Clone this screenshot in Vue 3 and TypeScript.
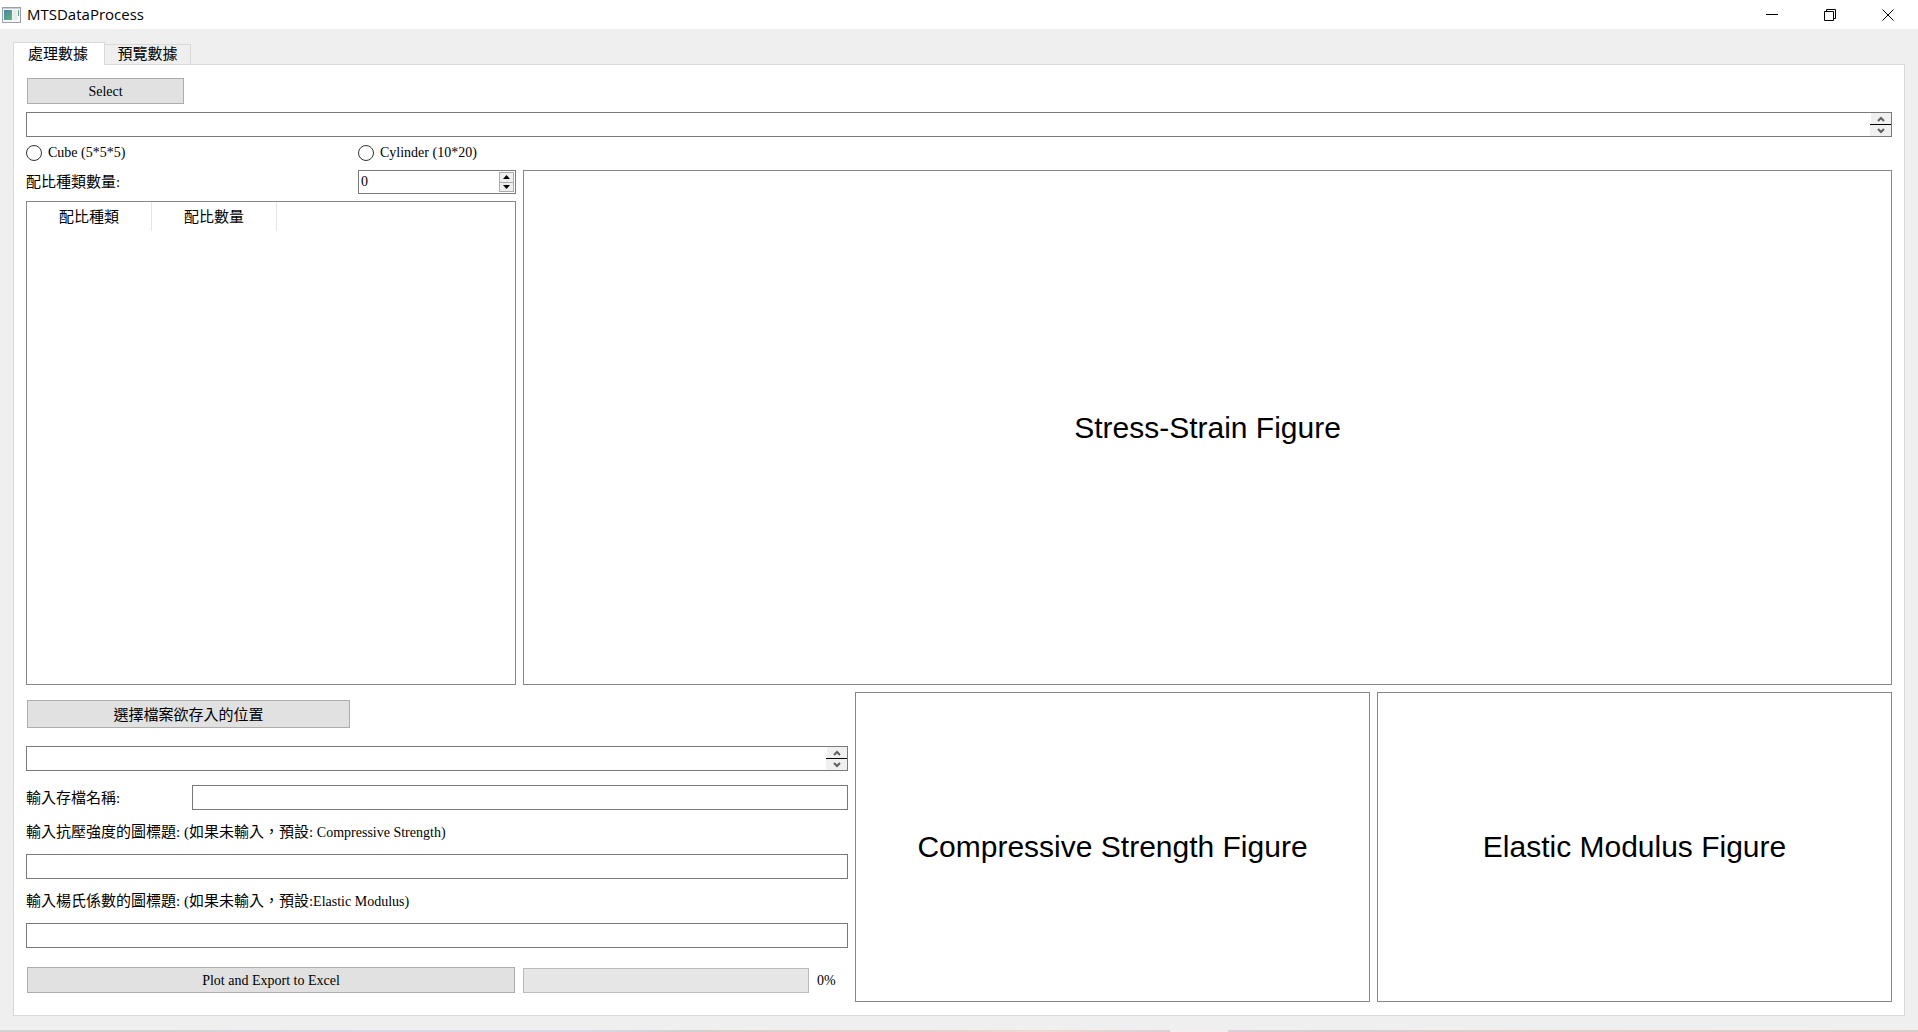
<script setup lang="ts">
import { ref } from 'vue'

type Tab = 'process' | 'preview'

const activeTab = ref<Tab>('process')
const tabs: { id: Tab; label: string }[] = [
  { id: 'process', label: '處理數據' },
  { id: 'preview', label: '預覽數據' },
]

const columns = ['配比種類', '配比數量']
const shape = ref('')
const mixCount = ref(0)
const sourceFiles = ref('')
const savePath = ref('')
const fileName = ref('')
const strengthTitle = ref('')
const modulusTitle = ref('')
const progress = ref(0)

function step(delta: number): void {
  mixCount.value = Math.max(0, Number(mixCount.value) + delta)
}
</script>

<template>
  <div class="window" lang="zh-Hant">
    <header class="titlebar">
      <svg class="app-icon" width="19" height="16" viewBox="0 0 19 16" aria-hidden="true">
        <defs>
          <linearGradient id="screen" x1="0" y1="0" x2="1" y2="1">
            <stop offset="0" stop-color="#4a86a8" />
            <stop offset="1" stop-color="#62b17c" />
          </linearGradient>
        </defs>
        <rect x="0.5" y="0.5" width="18" height="15" fill="#f4f6f7" stroke="#9aa0a8" />
        <rect x="1" y="1" width="17" height="1" fill="#c9ced4" />
        <rect x="2" y="3" width="8" height="10" fill="url(#screen)" />
        <rect x="11" y="3" width="4" height="10" fill="#e6eaec" />
        <rect x="16" y="3" width="1" height="6" fill="#5fa58c" />
      </svg>
      <h1>MTSDataProcess</h1>
      <div class="window-buttons">
        <button type="button" aria-label="Minimize">
          <svg width="12" height="12" viewBox="0 0 12 12"><path d="M0 5.5H12" /></svg>
        </button>
        <button type="button" aria-label="Restore">
          <svg width="12" height="12" viewBox="0 0 12 12"><path d="M.5 2.5H9.5V11.5H.5ZM2.5 2.5V.5H11.5V9.5H9.5" /></svg>
        </button>
        <button type="button" aria-label="Close">
          <svg width="12" height="12" viewBox="0 0 12 12"><path d="M.5 .5L11.5 11.5M11.5 .5L.5 11.5" /></svg>
        </button>
      </div>
    </header>

    <main class="client">
      <div class="tabs" role="tablist">
        <button
          v-for="tab in tabs"
          :key="tab.id"
          type="button"
          role="tab"
          :aria-selected="activeTab === tab.id"
          :class="['tab', { active: activeTab === tab.id }]"
          @click="activeTab = tab.id"
        >{{ tab.label }}</button>
      </div>

      <section class="pane">
        <button type="button" class="push select latin">Select</button>

        <div class="field scroller">
          <textarea v-model="sourceFiles" aria-label="Selected files"></textarea>
          <div class="scroll-buttons">
            <button type="button" aria-label="Scroll up">
              <svg width="8" height="6" viewBox="0 0 8 6"><path d="M1 5L4 2L7 5" /></svg>
            </button>
            <button type="button" aria-label="Scroll down">
              <svg width="8" height="6" viewBox="0 0 8 6"><path d="M1 1L4 4L7 1" /></svg>
            </button>
          </div>
        </div>

        <div class="shapes latin">
          <label><input v-model="shape" type="radio" name="shape" value="cube" />Cube (5*5*5)</label>
          <label><input v-model="shape" type="radio" name="shape" value="cylinder" />Cylinder (10*20)</label>
        </div>

        <div class="upper">
          <div class="mix">
            <div class="mix-count">
              <label for="mix-count">配比種類數量:</label>
              <div class="field spin">
                <input id="mix-count" v-model="mixCount" class="latin" type="text" inputmode="numeric" />
                <div class="spin-buttons">
                  <button type="button" aria-label="Increase" @click="step(1)">
                    <svg width="7" height="4" viewBox="0 0 7 4"><path d="M0 4L3.5 0L7 4Z" /></svg>
                  </button>
                  <button type="button" aria-label="Decrease" @click="step(-1)">
                    <svg width="7" height="4" viewBox="0 0 7 4"><path d="M0 0L3.5 4L7 0Z" /></svg>
                  </button>
                </div>
              </div>
            </div>
            <div class="frame table-frame">
              <table>
                <thead>
                  <tr><th v-for="name in columns" :key="name" scope="col">{{ name }}</th></tr>
                </thead>
              </table>
            </div>
          </div>
          <div class="frame figure">Stress-Strain Figure</div>
        </div>

        <div class="lower">
          <form class="export" @submit.prevent>
            <button type="button" class="push location">選擇檔案欲存入的位置</button>
            <div class="field scroller save-path">
              <textarea v-model="savePath" aria-label="Save location"></textarea>
              <div class="scroll-buttons">
                <button type="button" aria-label="Scroll up">
                  <svg width="8" height="6" viewBox="0 0 8 6"><path d="M1 5L4 2L7 5" /></svg>
                </button>
                <button type="button" aria-label="Scroll down">
                  <svg width="8" height="6" viewBox="0 0 8 6"><path d="M1 1L4 4L7 1" /></svg>
                </button>
              </div>
            </div>
            <div class="name-row">
              <label for="file-name">輸入存檔名稱:</label>
              <input id="file-name" v-model="fileName" class="field" type="text" />
            </div>
            <label class="caption" for="strength-title">輸入抗壓強度的圖標題: (如果未輸入，預設: <span class="latin">Compressive Strength)</span></label>
            <input id="strength-title" v-model="strengthTitle" class="field" type="text" />
            <label class="caption" for="modulus-title">輸入楊氏係數的圖標題: (如果未輸入，預設:<span class="latin">Elastic Modulus)</span></label>
            <input id="modulus-title" v-model="modulusTitle" class="field" type="text" />
            <div class="run-row latin">
              <button type="submit" class="push">Plot and Export to Excel</button>
              <div class="progress">
                <progress id="export-progress" :value="progress" max="100"></progress>
                <label for="export-progress">{{ progress }}%</label>
              </div>
            </div>
          </form>
          <div class="frame figure">Compressive Strength Figure</div>
          <div class="frame figure">Elastic Modulus Figure</div>
        </div>
      </section>
    </main>
    <div class="desktop-edge"></div>
  </div>
</template>

<style>
body {
  margin: 0;
}
</style>

<style scoped>
.window {
  display: flex;
  flex-direction: column;
  min-height: 100vh;
  background: #efefef;
  color: #000;
  font: 15px/20px "Liberation Serif", "Noto Sans CJK TC", serif;
}

.window *,
.window {
  box-sizing: border-box;
}

button,
input,
textarea {
  margin: 0;
  padding: 0;
  border: 0;
  border-radius: 0;
  background: none;
  color: inherit;
  font: inherit;
  outline: none;
}

.latin {
  font-size: 14px;
}

/* Title bar */
.titlebar {
  display: flex;
  align-items: center;
  height: 29px;
  padding-left: 2px;
  background: #fff;
}

h1 {
  flex: 1;
  margin: 0 0 0 6px;
  padding-bottom: 2px;
  font: 15px/20px "Open Sans", sans-serif;
}

.window-buttons {
  display: flex;
  padding-right: 1px;
}

.window-buttons button {
  display: flex;
  align-items: center;
  justify-content: center;
  width: 58px;
  height: 28px;
}

.window-buttons path {
  fill: none;
  stroke: #000;
}

/* Tabs */
.client {
  display: flex;
  flex: 1;
  flex-direction: column;
  padding: 13px 13px 14px;
}

.tabs {
  display: flex;
  align-items: flex-end;
}

.tab {
  width: 86px;
  height: 20px;
  border: 1px solid #d9d9d9;
  border-width: 1px 1px 0 0;
  line-height: 19px;
}

.tab.active {
  z-index: 1;
  width: 92px;
  height: 23px;
  margin-bottom: -1px;
  padding-right: 16px;
  padding-left: 14px;
  border-left-width: 1px;
  background: #fff;
}

.pane {
  display: flex;
  flex: 1;
  flex-direction: column;
  padding: 13px 12px;
  border: 1px solid #d9d9d9;
  background: #fff;
}

/* Controls */
.push {
  height: 26px;
  padding-top: 2px;
  border: 1px solid #adadad;
  background: #e1e1e1;
}

.field {
  display: block;
  width: 100%;
  height: 25px;
  border: 1px solid #7a7a7a;
  background: #fff;
}

input.field {
  padding: 0 3px;
}

.frame {
  border: 1px solid #828790;
}

.select {
  width: 157px;
  margin-left: 1px;
}

.scroller {
  display: flex;
  margin-top: 8px;
}

.scroller textarea {
  flex: 1;
  resize: none;
  overflow: hidden;
}

.scroll-buttons {
  display: flex;
  flex-direction: column;
  width: 21px;
}

.scroll-buttons button {
  display: flex;
  flex: 1;
  align-items: center;
  justify-content: center;
  border-left: 1px solid #fff;
  background: #f0f0f0;
}

.scroll-buttons button + button {
  border-top: 1px solid #000;
  border-left: 0;
}

.scroll-buttons path {
  fill: none;
  stroke: #606060;
  stroke-width: 2;
}

.shapes {
  display: flex;
  margin: 6px 0 7px;
}

.shapes label {
  display: flex;
  align-items: center;
  width: 332px;
}

.shapes input {
  width: 16px;
  height: 16px;
  margin-right: 6px;
  border: 1px solid #333;
  border-radius: 50%;
  background: #fff;
  appearance: none;
}

.shapes input:checked {
  background: radial-gradient(#333 4px, #fff 5px);
}

/* Mix table and main figure */
.upper {
  display: flex;
  flex: 1;
  gap: 7px;
}

.mix {
  display: flex;
  flex: none;
  flex-direction: column;
  gap: 7px;
  width: 490px;
}

.mix-count {
  display: flex;
  align-items: center;
  justify-content: space-between;
}

.spin {
  display: flex;
  width: 158px;
  height: 24px;
  padding: 1px;
}

.spin input {
  flex: 1;
  min-width: 0;
  padding-left: 1px;
}

.spin-buttons {
  display: flex;
  flex-direction: column;
  width: 15px;
}

.spin-buttons button {
  display: flex;
  flex: 1;
  align-items: center;
  justify-content: center;
  border: 1px solid #acacac;
  background: #efefef;
}

.spin-buttons button + button {
  border-top: 0;
}

.table-frame {
  flex: 1;
}

table {
  border-spacing: 0;
}

th {
  width: 125px;
  height: 29px;
  padding: 0;
  border-right: 1px solid #e5e5e5;
  font-weight: 400;
}

.figure {
  display: flex;
  flex: 1;
  align-items: center;
  justify-content: center;
  font: 30px/36px "Liberation Sans", sans-serif;
}

/* Export form and result figures */
.lower {
  display: flex;
  gap: 7px;
  margin-top: 7px;
}

.export {
  display: flex;
  flex: none;
  flex-direction: column;
  width: 822px;
  padding: 8px 0 9px;
}

.location {
  width: 323px;
  height: 28px;
  margin-left: 1px;
}

.save-path {
  margin: 18px 0 14px;
}

.name-row {
  display: flex;
  align-items: center;
}

.name-row label {
  flex: none;
  width: 166px;
}

.caption {
  height: 20px;
  margin: 12px 0;
}

.run-row {
  display: flex;
  gap: 8px;
  margin-top: 19px;
}

.run-row .push {
  width: 488px;
  margin-left: 1px;
}

.progress {
  display: flex;
  flex: 1;
  align-items: flex-end;
  gap: 8px;
}

progress {
  width: 286px;
  height: 25px;
  border: 1px solid #bcbcbc;
  background: #e6e6e6;
  appearance: none;
}

progress::-webkit-progress-bar {
  background: #e6e6e6;
}

progress::-webkit-progress-value {
  background: #06b025;
}

.progress label {
  line-height: 25px;
}

.desktop-edge {
  height: 2px;
  background: linear-gradient(90deg, #d2d2d2 0 8%, #d8d8e8 20% 30%, #d2d0ce 36%, #e4cfcd 44% 48%, #f0d9d0 54%, #dccfd6 61%, #f5eeee 61% 64%, #dccfd8 64%, #d6cdd0 70%, #e2cfcd 80%, #dccccc);
}
</style>
